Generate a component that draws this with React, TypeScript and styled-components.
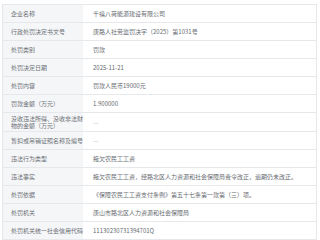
import styled, { createGlobalStyle } from "styled-components";

const GlobalStyle = createGlobalStyle`
  html, body {
    margin: 0;
    padding: 0;
    background: #ffffff;
  }
  body {
    font-family: "Noto Sans CJK SC", "Noto Sans", sans-serif;
  }
`;

const Page = styled.div`
  width: 320px;
  height: 240px;
  padding: 4px 3px 0 2px;
  box-sizing: border-box;
  overflow: hidden;
`;

const Table = styled.div`
  border: 1px solid #e6e8eb;
  border-bottom: none;
`;

const Row = styled.div`
  display: grid;
  grid-template-columns: 80px 1fr;
  min-height: 17px;
  border-bottom: 1px solid #e6e8eb;
`;

const Cell = styled.div`
  display: flex;
  align-items: center;
  font-size: 6px;
  line-height: 7px;
  padding: 2px 0 2px 8px;
`;

const Label = styled(Cell)`
  background: #f5f6f8;
  color: #6b6f75;
`;

const Value = styled(Cell)<{ $muted?: boolean }>`
  color: ${(p) => (p.$muted ? "#b5b8bd" : "#666a70")};
  padding: 2px 8px 2px 10px;
`;

const rows: [string, string][] = [
  ["企业名称", "千禧八荷能源建设有限公司"],
  ["行政处罚决定书文号", "唐路人社劳监罚决字（2025）第1031号"],
  ["处罚类别", "罚款"],
  ["处罚决定日期", "2025-11-21"],
  ["处罚内容", "罚款人民币19000元"],
  ["罚款金额（万元）", "1.900000"],
  ["没收违法所得、没收非法财物的金额（万元）", "—"],
  ["暂扣或吊销证照名称及编号", "—"],
  ["违法行为类型", "拖欠农民工工资"],
  ["违法事实", "拖欠农民工工资，经路北区人力资源和社会保障局责令改正，逾期仍未改正。"],
  ["处罚依据", "《保障农民工工资支付条例》第五十七条第一款第（三）项。"],
  ["处罚机关", "唐山市路北区人力资源和社会保障局"],
  ["处罚机关统一社会信用代码", "11130230731394701Q"],
];

const App = () => {
  return (
    <>
      <GlobalStyle />
      <Page>
        <Table>
          {rows.map(([label, value]) => (
            <Row key={label}>
              <Label>{label}</Label>
              <Value $muted={value === "—"}>{value}</Value>
            </Row>
          ))}
        </Table>
      </Page>
    </>
  );
};

export default App;
